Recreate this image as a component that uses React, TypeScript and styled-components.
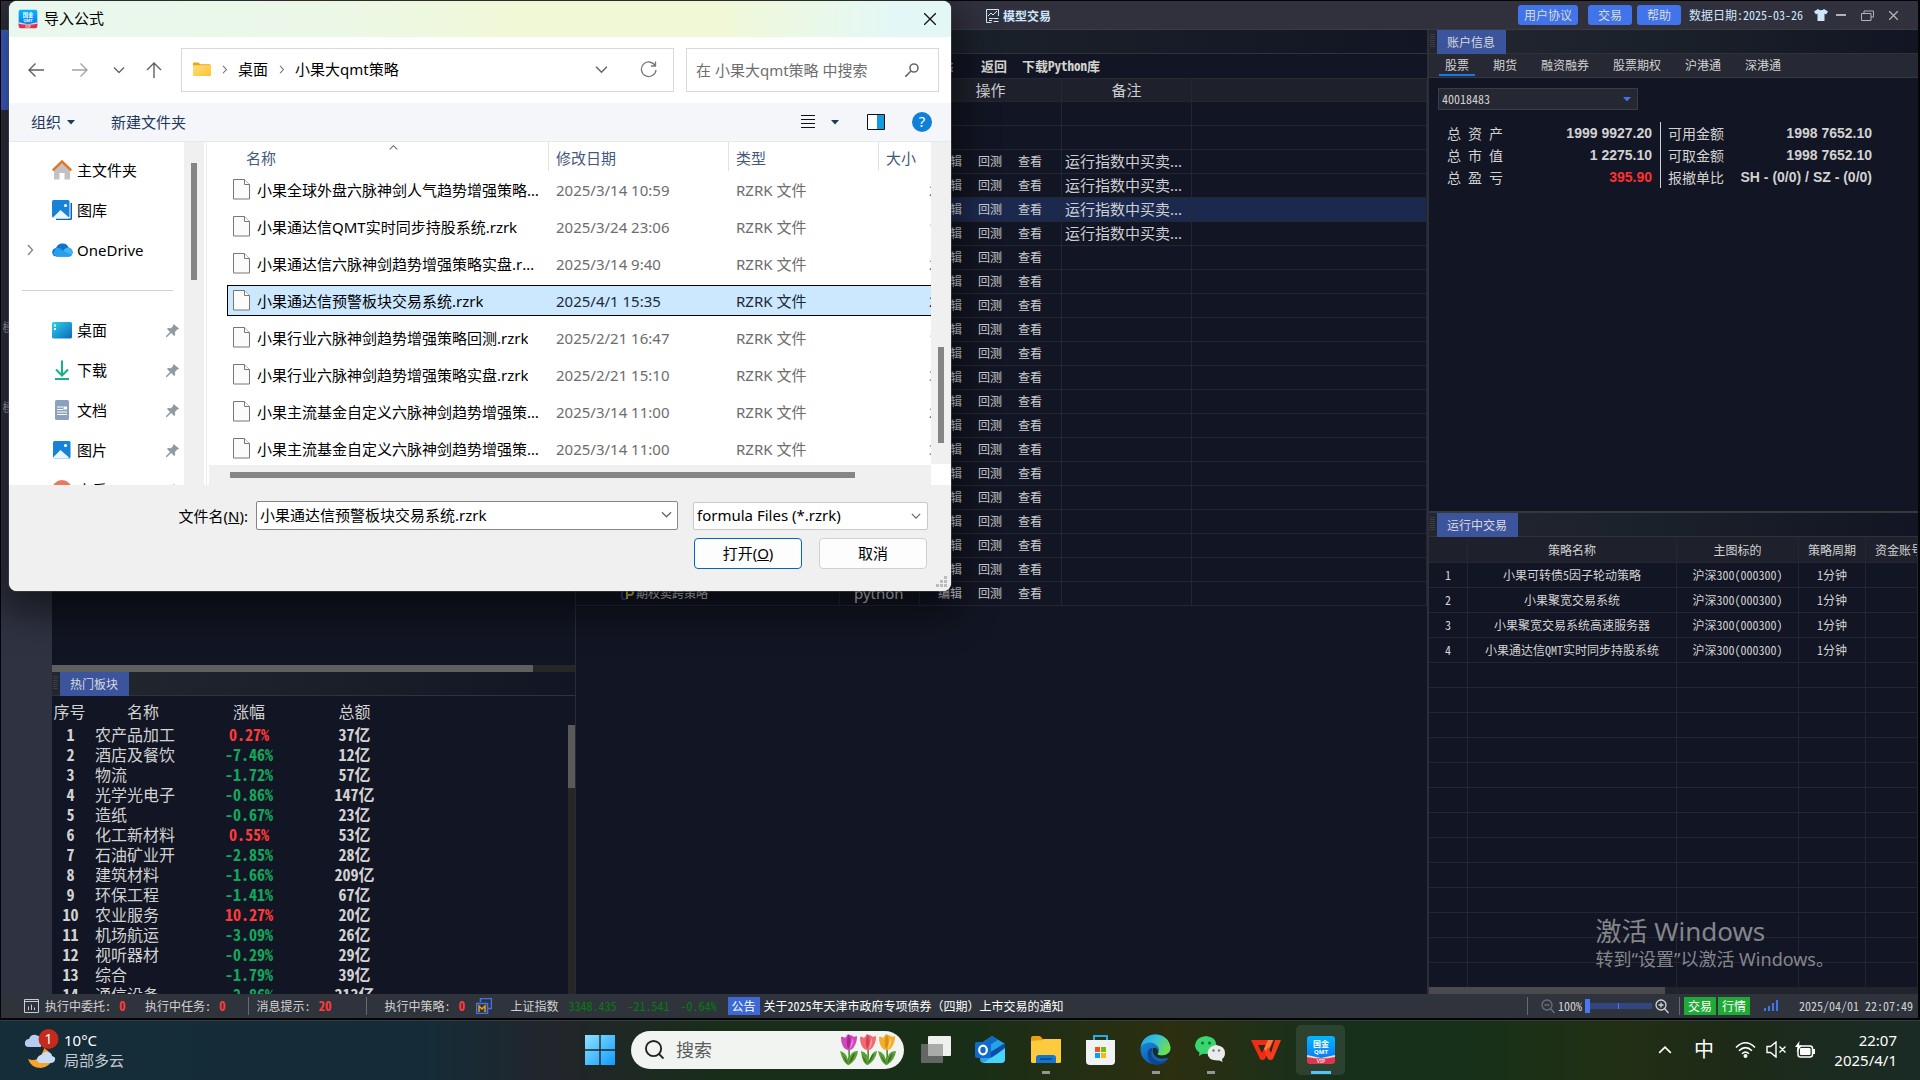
import React from 'react';
import styled, { createGlobalStyle, css } from 'styled-components';

const ui = '"Noto Sans", "Noto Sans CJK SC", sans-serif';
const term = '"Noto Sans Mono CJK SC", "Noto Sans CJK SC", monospace';

const Global = createGlobalStyle`
  *, *::before, *::after { box-sizing: border-box; }
  html, body { margin: 0; height: 100%; overflow: hidden; background: #121523; }
  body { font: 12px/18px ${term}; color: #d2d2d2; }
  button, input, select { font: inherit; color: inherit; margin: 0; padding: 0; border: 0; border-radius: 0; background: none; outline: none; }
  a { color: inherit; text-decoration: none; }
  svg { display: block; flex: none; }
  table { border-collapse: collapse; border-spacing: 0; }
`;

/* ---------- shell ---------- */
const Desktop = styled.div`
  position: relative;
  height: 100vh;
  display: flex;
  flex-direction: column;
  overflow: hidden;
`;
const AppWindow = styled.main`
  flex: 1;
  min-height: 0;
  display: flex;
  flex-direction: column;
  border: 1px solid #050505;
  border-width: 1px 2px 2px 1px;
`;
const TitleBar = styled.header`
  flex: none;
  height: 29px;
  display: flex;
  align-items: center;
  padding: 0 12px 0 985px;
  background: #30313d;
  border-bottom: 1px solid #3a3c44;
`;
const AppTitle = styled.h1`
  margin: 0;
  flex: 1;
  display: flex;
  align-items: center;
  gap: 4px;
  padding-top: 2px;
  font-size: 12px;
  line-height: 18px;
  font-weight: 700;
  color: #cfe6ff;
`;
const PillButton = styled.button<{ $after: number }>`
  height: 20px;
  padding: 0 ${p => (p.$after > 8 ? 6 : 10)}px;
  margin-right: ${p => p.$after}px;
  border-radius: 3px;
  background: #4173ea;
  color: #d8dcd0;
  line-height: 18px;
`;
const DataDate = styled.span`
  color: #cfe6ff;
  margin-right: 11px;
`;
const WinButton = styled.button`
  display: grid;
  place-items: center;
  width: 26px;
  height: 24px;
`;
const WinButtons = styled.div`
  display: flex;
  align-items: center;
`;
const Workspace = styled.div`
  flex: 1;
  min-height: 0;
  display: grid;
  grid-template-columns: 51px 524px minmax(0, 1fr) 491px;
`;

/* ---------- left rail ---------- */
const Rail = styled.nav`
  background: #2f3241;
`;
const RailItem = styled.button<{ $active?: boolean }>`
  width: 100%;
  height: 80px;
  display: flex;
  align-items: flex-end;
  justify-content: center;
  padding-bottom: 14px;
  white-space: nowrap;
  color: #a9acb4;
  background: ${p => (p.$active ? '#4169dc' : 'transparent')};
`;

/* ---------- shared panel parts ---------- */
const PanelStrip = styled.div`
  flex: none;
  height: 24px;
  display: flex;
  background: linear-gradient(90deg, #22262f, #1b212b 45%, #121523);
  border-bottom: 1px solid #30323a;
`;
const Grip = styled.span`
  width: 5px;
  height: 14px;
  margin: 4px 2px 0 1px;
  background: repeating-linear-gradient(#3a3d46 0 1px, transparent 1px 2px);
`;
const PanelTab = styled.button`
  height: 24px;
  padding: 0 11px 0 10px;
  color: #d8dade;
  background: #3c549c;
`;
const Column = styled.section`
  min-width: 0;
  min-height: 0;
  display: flex;
  flex-direction: column;
  overflow: hidden;
`;

/* ---------- hot sectors ---------- */
const LeftColumn = styled(Column)`
  border-right: 1px solid #2a2c35;
`;
const LeftTop = styled.div`
  height: 635px;
  flex: none;
`;
const HTrack = styled.div<{ $thumb: string; $color: string; $track: string }>`
  flex: none;
  height: 7px;
  background: ${p => `linear-gradient(${p.$color}, ${p.$color}) 0 0 / ${p.$thumb} 100% no-repeat ${p.$track}`};
`;
const SectorBody = styled.div`
  flex: 1;
  min-height: 0;
  display: flex;
  border-top: 1px solid #121523;
  overflow: hidden;
`;
const SectorTable = styled.table`
  width: 358px;
  table-layout: fixed;
  align-self: flex-start;
  font-size: 16px;
  line-height: 20px;
  th { height: 27px; padding: 0; font-weight: 400; }
  td { height: 20px; padding: 0; text-align: center; font-weight: 700; white-space: nowrap; }
  td:first-child { padding-left: 2px; }
`;
const SectorName = styled.span`
  display: block;
  text-align: left;
  font-weight: 400;
  padding-left: 8px;
`;
const Change = styled.span<{ $up: boolean }>`
  color: ${p => (p.$up ? '#ff3b3b' : '#12a75c')};
`;
const VTrack = styled.div`
  width: 7px;
  margin: 28px 0 0 auto;
  background: linear-gradient(#5a5a5a, #5a5a5a) 0 0 / 100% 63px no-repeat #262626;
`;

/* ---------- strategy table ---------- */
const MenuRow = styled.div`
  flex: none;
  height: 25px;
  display: flex;
  align-items: center;
  justify-content: flex-start;
  gap: 15px;
  padding-left: 351px;
  border-bottom: 1px solid #262934;
  font-size: 13px;
  font-weight: 700;
  color: #d4d4cf;
  button { white-space: nowrap; }
  button:first-child { margin-right: 13px; }
`;
const line = '1px solid #242732';
const StrategyTable = styled.table`
  width: 100%;
  table-layout: fixed;
  border-collapse: separate;
  font-family: ${ui};
  font-size: 15px;
  line-height: 20px;
  color: #cdced1;
  th { height: 23px; padding: 0; font-weight: 400; background: #1e212b; border-right: ${line}; border-bottom: ${line}; }
  td { height: 24px; padding: 0 0 2px 3px; border-right: ${line}; border-bottom: ${line}; white-space: nowrap; overflow: hidden; }
`;
const StrategyRow = styled.tr<{ $selected?: boolean }>`
  background: ${p => (p.$selected ? '#1c294f' : 'transparent')};
`;
const Actions = styled.span`
  display: flex;
  gap: 16px;
  padding-left: 15px;
  font: 12px/18px ${term};
`;
const TreeName = styled.span`
  display: flex;
  align-items: center;
  gap: 1px;
  padding-left: 42px;
  font: 12px/18px ${term};
`;
const Kind = styled.span`
  display: block;
  padding-left: 11px;
`;

/* ---------- right column ---------- */
const RightColumn = styled(Column)`
  border-left: 2px solid #2c2f38;
`;
const SubTabs = styled.nav`
  flex: none;
  height: 24px;
  display: flex;
  gap: 12px;
  padding-left: 10px;
  background: #262933;
  border-bottom: 1px solid #363841;
`;
const SubTab = styled.a<{ $active?: boolean }>`
  padding: 2px 6px 0;
  height: 22px;
  border-bottom: 2px solid ${p => (p.$active ? '#1778e8' : 'transparent')};
`;
const AccountBody = styled.div`
  height: 435px;
  flex: none;
  padding: 10px 9px;
  border-bottom: 2px solid #36383f;
`;
const Stack = styled.span<{ $w: string }>`
  display: inline-grid;
  width: ${p => p.$w};
  align-items: center;
  > * { grid-area: 1 / 1; }
  > svg { justify-self: end; margin-right: 7px; pointer-events: none; }
`;
const AccountSelect = styled.select`
  appearance: none;
  width: 100%;
  height: 22px;
  padding: 0 3px;
  background: #252833;
  border: 1px solid #3a3c45;
`;
const Balances = styled.div`
  display: flex;
  margin: 12px 0 0 9px;
`;
const BalanceTable = styled.table<{ $w: number }>`
  width: ${p => p.$w}px;
  font-size: 14px;
  line-height: 20px;
  th { height: 22px; padding: 0; text-align: left; font-weight: 400; white-space: nowrap; }
  td { padding: 0; text-align: right; font: 700 14px/20px "Liberation Sans", sans-serif; white-space: nowrap; }
  & + & { margin-left: 8px; padding-left: 7px; border-left: 1px solid #d2d2d2; border-collapse: separate; }
`;
const Loss = styled.span`
  color: #ff3030;
`;
const RunningWrap = styled.div`
  flex: 1;
  min-height: 0;
  overflow: hidden;
`;
const RunningTable = styled.table`
  width: 100%;
  table-layout: fixed;
  border-collapse: separate;
  text-align: center;
  th, td { height: 25px; padding: 0; font-weight: 400; border-right: ${line}; border-bottom: ${line}; white-space: nowrap; overflow: hidden; }
  th { height: 26px; background: #1e212b; }
  th:last-child { padding-left: 9px; text-align: left; }
`;

/* ---------- status bar ---------- */
const StatusBar = styled.footer`
  flex: none;
  height: 24px;
  display: flex;
  align-items: center;
  padding: 0 5px 0 23px;
  background: #2f343c;
  white-space: nowrap;
`;
const StatusItem = styled.span<{ $w?: number }>`
  display: flex;
  align-items: center;
  width: ${p => (p.$w ? p.$w + 'px' : 'auto')};
  b { color: #ff3b3b; margin-left: 8px; font-size: 13px; }
  b + svg { margin-left: auto; }
`;
const IndexName = styled.span`
  margin: 0 10px 0 19px;
`;
const ZoomValue = styled.label`
  margin-left: 3px;
`;
const Divider = styled.span<{ $l: number; $r: number }>`
  width: 1px;
  height: 18px;
  margin: 0 ${p => p.$r}px 0 ${p => p.$l}px;
  background: #666a72;
`;
const IndexValue = styled.span`
  color: #067c0c;
  margin-right: 11px;
`;
const Badge = styled.button<{ $bg: string }>`
  height: 18px;
  padding: 0 4px;
  margin-right: 2px;
  color: #fff;
  background: ${p => p.$bg};
`;
const Notice = styled.a`
  color: #fff;
  margin: 0 auto 0 2px;
`;
const ZoomRange = styled.input`
  appearance: none;
  width: 67px;
  height: 14px;
  margin: 0 3px;
  background: linear-gradient(#4a78f0, #4a78f0) center / 1px 6px no-repeat, linear-gradient(#32477f, #32477f) center / 100% 6px no-repeat;
  &::-webkit-slider-thumb { appearance: none; width: 5px; height: 14px; background: #4a78f0; }
`;
const Clock = styled.time`
  margin-left: 20px;
`;

/* ---------- taskbar ---------- */
const Taskbar = styled.nav`
  flex: none;
  height: 60px;
  display: grid;
  grid-template-columns: minmax(0, 1fr) auto minmax(0, 1fr);
  align-items: center;
  padding-bottom: 2px;
  border-top: 1px solid #343c42;
  background: linear-gradient(90deg, #152c39 0%, #152c38 22%, #22252b 29%, #182e19 38%, #182e17 50%, #2c2f10 61%, #17301c 69%, #163019 76%, #213014 84%, #1d2a17 90%, #1a2b26 100%);
  font-family: ${ui};
  font-size: 15px;
  line-height: 20px;
  color: #fff;
`;
const Weather = styled.button`
  justify-self: start;
  display: flex;
  align-items: center;
  gap: 4px;
  padding-left: 24px;
  text-align: left;
  span { display: block; }
  span span + span { color: #c4cbd0; }
`;
const Pinned = styled.div`
  display: flex;
  align-items: center;
`;
const TaskButton = styled.button<{ $state?: 'open' | 'active' }>`
  display: flex;
  align-items: center;
  justify-content: center;
  width: 49px;
  height: 50px;
  margin: 0 3px;
  border-radius: 5px;
  background:
    ${p => p.$state
      ? css`linear-gradient(${p.$state === 'active' ? '#56c2f5, #56c2f5' : '#92978f, #92978f'}) center bottom 1px / ${p.$state === 'active' ? 20 : 8}px 3px no-repeat`
      : 'none'}
    ${p => (p.$state === 'active' ? ', rgba(255, 255, 255, 0.09)' : '')};
`;
const SearchPill = styled.label`
  display: flex;
  align-items: center;
  width: 273px;
  height: 38px;
  margin: 0 4px;
  padding: 0 7px 0 14px;
  border-radius: 19px;
  background: #f2f4f2;
  input { flex: 1; min-width: 0; margin-left: 12px; font-size: 18px; line-height: 26px; }
  input::placeholder { color: #5a5d5a; opacity: 1; }
`;
const Tray = styled.div`
  justify-self: end;
  display: flex;
  align-items: center;
  padding-right: 23px;
`;
const TrayButton = styled.button<{ $w: number }>`
  width: ${p => p.$w}px;
  height: 32px;
  display: grid;
  place-items: center;
  font-size: 20px;
`;
const TrayClock = styled.button`
  margin-left: 7px;
  text-align: right;
  min-width: 64px;
  span { display: block; }
`;

/* ---------- watermark ---------- */
const Watermark = styled.aside`
  position: absolute;
  right: 86px;
  bottom: 109px;
  font-family: ${ui};
  color: #85868c;
  pointer-events: none;
  font-size: 18px;
  line-height: 24px;
  strong { display: block; font-size: 26px; line-height: 32px; font-weight: 400; }
`;

/* ---------- file dialog ---------- */
const Dialog = styled.div`
  position: absolute;
  left: 9px;
  top: 1px;
  width: 942px;
  border-radius: 8px;
  overflow: hidden;
  background: #fff;
  color: #000;
  font: 15px/22px ${ui};
  box-shadow: 0 0 0 1px rgba(80, 80, 80, 0.5);
`;
const DialogShadow = styled.div`
  position: absolute;
  left: 9px;
  top: 1px;
  width: 942px;
  height: 590px;
  border-radius: 8px;
  box-shadow: 0 14px 36px 8px rgba(0, 0, 0, 0.5);
`;
const DialogTitle = styled.header`
  display: flex;
  align-items: center;
  gap: 6px;
  height: 36px;
  padding: 0 15px 0 9px;
  background: linear-gradient(90deg, #e9f8ee 0, #ebf8e8 33%, #f1f8d6 55%, #f1f8d6 75%, #e3f8f6 94%);
  h2 { flex: 1; margin: 0; padding-bottom: 2px; font: inherit; }
`;
const NavRow = styled.div`
  display: flex;
  align-items: center;
  height: 66px;
  padding: 0 12px 0 14px;
`;
const NavButton = styled.button<{ $w: number }>`
  width: ${p => p.$w}px;
  height: 32px;
  display: grid;
  place-items: center;
`;
const Address = styled.div`
  flex: 1;
  display: flex;
  align-items: center;
  gap: 9px;
  height: 44px;
  margin-right: 12px;
  padding: 0 0 2px 11px;
  border: 1px solid #d9d9d9;
`;
const Spacer = styled.span`
  flex: 1;
`;
const SearchBox = styled.label`
  display: flex;
  align-items: center;
  width: 253px;
  height: 44px;
  padding: 0 19px 0 9px;
  border: 1px solid #d9d9d9;
  input { flex: 1; min-width: 0; }
  input::placeholder { color: #6e6e6e; opacity: 1; }
`;
const Toolbar = styled.div`
  display: flex;
  align-items: center;
  height: 39px;
  padding: 0 19px 0 22px;
  background: #f4f6f9;
  border-bottom: 1px solid #e5e8ec;
  color: #1e395b;
`;
const ToolButton = styled.button<{ $gap: number }>`
  display: flex;
  align-items: center;
  gap: 6px;
  margin-right: ${p => p.$gap}px;
`;
const Browser = styled.div`
  display: flex;
  height: 343px;
`;
const Places = styled.nav`
  width: 175px;
  padding-top: 8px;
  overflow: hidden;
`;
const Place = styled.a`
  display: grid;
  grid-template-columns: 23px 20px 1fr 13px;
  column-gap: 5px;
  align-items: center;
  height: 40px;
  padding: 0 5px 0 15px;
  > svg:nth-of-type(2), > svg:nth-of-type(3) { justify-self: center; }
`;
const PlaceRule = styled.hr`
  margin: 20px 11px 19px 13px;
  border: 0;
  border-top: 1px solid #d0d0d0;
`;
const ScrollV = styled.div<{ $top: number; $size: number }>`
  width: 20px;
  flex: 1;
  background: ${p => `linear-gradient(#858585, #858585) 7px ${p.$top}px / 6px ${p.$size}px no-repeat #f0f0f0`};
`;
const PlacesScroll = styled.div`
  width: 20px;
  display: flex;
`;
const FilePane = styled.div`
  flex: 1;
  min-width: 0;
  margin-left: 2px;
  border-left: 1px solid #ececec;
  display: flex;
  flex-direction: column;
`;
const FileClip = styled.div`
  height: 323px;
  overflow: hidden;
  padding-left: 20px;
`;
const FileTable = styled.table`
  width: 100%;
  table-layout: fixed;
  border-collapse: separate;
  th { height: 29px; padding: 3px 0 0 7px; text-align: left; font-weight: 400; color: #44597a; border-right: 1px solid #e2e2e2; }
  th:first-child { padding-left: 19px; }
  th:last-child { border-right: 0; }
  th svg { position: absolute; left: 380px; top: 142px; }
`;
const FileRow = styled.tr<{ $selected?: boolean }>`
  color: ${p => (p.$selected ? '#1c2a38' : '#6d6d6d')};
  td { height: 37px; padding: ${p => (p.$selected ? '3px 0' : '0')}; white-space: nowrap; overflow: hidden; }
`;
const Cell = styled.span<{ $selected?: boolean; $first?: boolean; $last?: boolean }>`
  display: flex;
  align-items: center;
  gap: 7px;
  height: 31px;
  padding-left: ${p => (p.$first ? 5 : p.$last ? 50 : 7)}px;
  border: 1px solid transparent;
  border-width: 1px 0 1px ${p => (p.$first ? 1 : 0)}px;
  ${p => p.$selected && css`background: #cce8ff; border-color: #000;`}
`;
const FileName = styled.span`
  color: #000;
  max-width: 284px;
  overflow: hidden;
  text-overflow: ellipsis;
`;
const ScrollH = styled.div`
  height: 20px;
  margin-left: 2px;
  background: linear-gradient(#858585, #858585) 21px 7px / 625px 6px no-repeat #f0f0f0;
`;
const FileScroll = styled.div`
  width: 20px;
  display: flex;
  flex-direction: column;
  padding-bottom: 21px;
`;
const DialogForm = styled.form`
  display: flex;
  flex-direction: column;
  gap: 8px;
  height: 106px;
  padding: 16px 23px 0 0;
  background: #f0f0f0;
`;
const FormLine = styled.div<{ $gap: number }>`
  display: flex;
  justify-content: flex-end;
  align-items: center;
  gap: ${p => p.$gap}px;
`;
const NameField = styled.span`
  display: flex;
  align-items: center;
  width: 422px;
  height: 29px;
  margin: 0 7px 0 0;
  padding: 0 5px 2px 3px;
  background: #fff;
  border: 1px solid #868686;
  border-radius: 2px;
  input { flex: 1; min-width: 0; }
`;
const TypeSelect = styled.select`
  appearance: none;
  width: 100%;
  height: 28px;
  padding: 0 3px 2px;
  background: #fff;
  border: 1px solid #c8c8c8;
  border-radius: 2px;
`;
const DialogButton = styled.button<{ $primary?: boolean }>`
  width: 108px;
  height: 31px;
  padding-bottom: 2px;
  border: 1px solid ${p => (p.$primary ? '#0067c0' : '#d0d0d0')};
  border-radius: 4px;
  background: #fdfdfd;
`;
const FormButtons = styled(FormLine)`
  padding-right: 1px;
`;
const ResizeGrip = styled.i`
  position: absolute;
  right: 3px;
  bottom: 3px;
`;

/* ---------- drawings ---------- */
const Chevron = ({ dir = 'down', size = 12, color = '#666' }: { dir?: 'down' | 'up' | 'right'; size?: number; color?: string }) => (
  <svg width={size} height={size} viewBox="0 0 12 12" fill="none" stroke={color} strokeWidth="1.4">
    <path d={dir === 'down' ? 'M1 3.5l5 5 5-5' : dir === 'up' ? 'M1 8.5l5-5 5 5' : 'M4 1l4.5 5L4 11'} />
  </svg>
);
const Caret = ({ color }: { color: string }) => (
  <svg width="8" height="5"><path d="M0 0h8L4 4.5z" fill={color} /></svg>
);
const QmtLogo = ({ w }: { w: number }) => (
  <svg width={w} height={w} viewBox="0 0 30 30">
    <defs><linearGradient id="qmt" x2="0" y2="1"><stop stopColor="#04b5ff" /><stop offset="1" stopColor="#0a73f5" /></linearGradient></defs>
    <rect x="1" y="1" width="28" height="26" rx="3" fill="url(#qmt)" />
    <path d="M1 20l14 3 14-3v4l-14 3-14-3z" fill="#f3d9c0" />
    <path d="M1 22q14 3 28 0v4q0 3-3 3H4q-3 0-3-3z" fill="#dc3552" />
    <text x="15" y="12" fontSize="8" fontWeight="700" textAnchor="middle" fill="#fff" fontFamily="Noto Sans CJK SC">国金</text>
    <text x="15" y="19" fontSize="6" fontWeight="700" textAnchor="middle" fill="#fff" fontFamily="Noto Sans">QMT</text>
    <text x="15" y="28" fontSize="5" fontWeight="700" textAnchor="middle" fill="#ffd9df" fontFamily="Noto Sans">VIP</text>
  </svg>
);
const FolderIcon = ({ w }: { w: number }) => (
  <svg width={w} height={w * 0.8} viewBox="0 0 20 16">
    <defs><linearGradient id="fold" x2="1" y2="1"><stop stopColor="#ffdf80" /><stop offset="1" stopColor="#ffc22e" /></linearGradient></defs>
    <path d="M0 1.500Q0 .5 1 .5h5l2 2h10.500q1 0 1 1V8H0z" fill="#f0a30a" />
    <rect x="0" y="3.500" width="20" height="12" rx="1" fill="url(#fold)" />
  </svg>
);
const DocIcon = () => (
  <svg width="17" height="21" viewBox="0 0 17 21" fill="#fbfbfb" stroke="#777"><path d="M.5.5h11l5 5v14.500H.5z" /><path d="M11.500.5v5h5" /></svg>
);
const PinIcon = () => (
  <svg width="13" height="13" viewBox="0 0 13 13" fill="#8f9aa3"><path d="M7.500 0L13 4.500l-1 1-1 .2-2 2.300.2 3-1 1-3-3L1 13H0v-1l4-4L1 5l1-1 3 .2L7 2z" /></svg>
);
const HomeIcon = () => (
  <svg width="20" height="20" viewBox="0 0 20 20"><path d="M2 9l8-7 8 7v10.500h-5.500V13h-5v6.500H2z" fill="#c2c2c4" /><path d="M.8 10.500L10 1.500l9.200 9" fill="none" stroke="#e8731c" strokeWidth="2.400" /></svg>
);
const PictureIcon = ({ stacked }: { stacked?: boolean }) => (
  <svg width="20" height="20" viewBox="0 0 20 20">
    {stacked && <path d="M4 3h16v15.500q0 1.500-1.500 1.500H4z" fill="#0b63b8" />}
    {stacked && <path d="M0 0h18.500v18.500H0z" fill="#fff" />}
    <rect x={stacked ? 0 : 1} y={stacked ? 0 : 1} width="17.500" height="17.500" rx="1.500" fill="#1683d8" />
    <path d="M1 17.500l7.500-7.500 8.500 7.500q-.5 1-1.500 1H2.500q-1 0-1.500-1z" fill="#e9f6ff" />
    <circle cx="13.500" cy="5.500" r="1.600" fill="#fff" />
  </svg>
);
const OneDriveIcon = () => (
  <svg width="21" height="14" viewBox="0 0 21 14"><path d="M4 5Q6 0 11 .5q4 0 5.500 4Q21 5.500 20.500 10q-.5 3.500-4 3.500H5Q0 13.500.2 9 .5 5.500 4 5z" fill="#1272d0" /><path d="M4 5q4-1 7 3l9 4q-1 1.800-3.500 1.800H5L1 11z" fill="#27a0ec" /><path d="M16.500 4.500Q21 5.500 20.500 10q0 1-.7 2L11 8q2-3.500 5.500-3.500z" fill="#3fb6f2" /></svg>
);
const DesktopIcon = () => (
  <svg width="20" height="17" viewBox="0 0 20 17"><defs><linearGradient id="dk" x2="1" y2="1"><stop stopColor="#2fd0e6" /><stop offset="1" stopColor="#0d68bf" /></linearGradient></defs><rect width="20" height="16.500" rx="1.500" fill="url(#dk)" /><path d="M2 2.500h2v2H2zM2 6h2v2H2z" fill="#e9fcff" /></svg>
);
const DownloadIcon = () => (
  <svg width="20" height="20" viewBox="0 0 20 20" fill="none" stroke="#18ae87" strokeWidth="2"><path d="M10 .5v15M4 9.500l6 6 6-6M3 19h14" /></svg>
);
const DocumentIcon = () => (
  <svg width="20" height="20" viewBox="0 0 20 20"><rect x="3" width="14" height="20" rx="1.500" fill="#8ba2bf" /><path d="M5 7h6M5 9.500h6M5 12h10M5 14.500h10" stroke="#fff" /><path d="M11.500 6.500h3.500v3h-3.500z" fill="#fff" /></svg>
);
const MusicIcon = () => (
  <svg width="20" height="20" viewBox="0 0 20 20"><circle cx="10" cy="10" r="10" fill="#e67a5c" /><path d="M9 15V6l4 2" stroke="#fff" strokeWidth="1.500" fill="none" /></svg>
);
const SearchIcon = ({ size, color }: { size: number; color: string }) => (
  <svg width={size} height={size} viewBox="0 0 20 20" fill="none" stroke={color} strokeWidth="2"><circle cx="9" cy="9" r="8" /><path d="M14.500 14.500l5 5" /></svg>
);
const Tulip = ({ x, c, d, tip, spread }: { x: number; c: string; d: string; tip: string; spread: number }) => (
  <g transform={`translate(${x} 0)`}>
    <path d="M10 15q1 8-1 16" stroke="#4b8f2a" strokeWidth="1.600" fill="none" />
    <path d={`M9 32Q4 30 ${10 - spread} 18q4 1 6 4 2 4 3 8 0-7 3-10 2-2 ${spread - 3}-2-1 9-9 14z`} fill="#5c9e35" />
    <path d="M9 32q-1-6-5-9 3 6 5 9zM10 31q2-8 6-11-2 7-6 11z" fill="#2f6e1f" />
    <path d="M2 4q2-1 4 1l3-4q2 2 3 1l3 2q2-1 3-1 0 6-2 9-2 5-6 5-5 0-7-6-1-3-1-7z" fill={c} />
    <path d="M10 1Q6 8 9 16q5-6 1-15z" fill={d} />
    <path d="M14 5q-3 5-3 11 4-4 3-11z" fill={tip} />
  </g>
);
const Tulips = () => (
  <svg width="60" height="34" viewBox="0 0 60 34">
    <Tulip x={2} c="#d048bd" d="#a9279a" tip="#e87fd8" spread={9} />
    <Tulip x={21} c="#ef6a75" d="#d9434f" tip="#f79aa0" spread={7} />
    <Tulip x={40} c="#f3ae2c" d="#dc8f17" tip="#fbcf6b" spread={9} />
  </svg>
);
const WeatherIcon = () => (
  <svg width="36" height="44" viewBox="0 0 36 44">
    <path d="M4 31q8 3 12-3 4-5 4-8 8 5 8 11-2 8-11 9-10 0-13-9z" fill="#f5a32a" />
    <path d="M17 35q-4 0-4-4 1-4 5-4 2-4 6-3 4 1 4 4 4 1 3 4-1 3-4 3z" fill="#c7dcf6" />
    <path d="M5 19q-5 0-4-5 1-3 4-3 2-5 7-4 4 1 5 4v8z" fill="#b4cdf0" />
    <circle cx="24.500" cy="11" r="10" fill="#c42b1c" />
    <text x="24.500" y="16" fontSize="14" textAnchor="middle" fill="#fff" fontFamily="Noto Sans">1</text>
  </svg>
);
const StartIcon = () => (
  <svg width="30" height="30" viewBox="0 0 30 30"><defs><linearGradient id="win" x2="1" y2="1"><stop stopColor="#8fe2ff" /><stop offset="1" stopColor="#0f9bff" /></linearGradient></defs><path d="M0 0h14.300v14.300H0zM15.700 0H30v14.300H15.700zM0 15.700h14.300V30H0zM15.700 15.700H30V30H15.700z" fill="url(#win)" /></svg>
);
const TaskViewIcon = () => (
  <svg width="30" height="28" viewBox="0 0 30 28"><rect y="8" width="22" height="19" rx="1" fill="#636663" /><rect x="7" width="23" height="20" rx="1" fill="#eeefee" /><rect x="7" y="8" width="15" height="12" fill="#a9aba9" /></svg>
);
const OutlookIcon = () => (
  <svg width="31" height="28" viewBox="0 0 31 28">
    <path d="M5 8L17 0l13 8v15q0 4-4 4H9q-4 0-4-4z" fill="#2ba3ea" />
    <path d="M6 8l11-8 6 4-13 9z" fill="#1269c4" />
    <path d="M10 12L23 4l7 4-15 12z" fill="#24a3ea" />
    <path d="M14 17L30 7v6L17 24z" fill="#0c4ba8" />
    <path d="M30 12v11q0 4-4 4H8L22 18z" fill="#49d2fa" />
    <rect y="6" width="16" height="16" rx="2" fill="#0f6acb" />
    <ellipse cx="8" cy="14" rx="3.800" ry="4.300" fill="none" stroke="#fff" strokeWidth="2.200" />
  </svg>
);
const ExplorerIcon = () => (
  <svg width="30" height="28" viewBox="0 0 30 28">
    <path d="M0 2q0-2 2-2h7l3 3h16q2 0 2 2v6H0z" fill="#e8a010" /><path d="M0 5l12-1 1-1h17v23q0 1-2 1H2q-2 0-2-1z" fill="#ffcb3d" />
    <path d="M5 27v-5q0-3 3-3h14q3 0 3 3v5z" fill="#1277cf" /><path d="M9 23h12" stroke="#0b4c91" strokeWidth="1.600" />
  </svg>
);
const StoreIcon = () => (
  <svg width="29" height="30" viewBox="0 0 29 30"><path d="M8 6V1h13v5" fill="none" stroke="#28a8ea" strokeWidth="2" /><path d="M0 5h29v21q0 4-4 4H4q-4 0-4-4z" fill="#f1f2f4" /><path d="M9 12h5v5H9z" fill="#f25022" /><path d="M15 12h5v5h-5z" fill="#7fba00" /><path d="M9 18h5v5H9z" fill="#00a4ef" /><path d="M15 18h5v5h-5z" fill="#ffb900" /></svg>
);
const EdgeIcon = () => (
  <svg width="31" height="31" viewBox="0 0 31 31">
    <defs>
      <linearGradient id="eg" x2="1" y2=".5"><stop stopColor="#1d9fe6" /><stop offset=".5" stopColor="#37c1d8" /><stop offset="1" stopColor="#6ede4c" /></linearGradient>
      <linearGradient id="eb" x2=".6" y2="1"><stop stopColor="#1c93e4" /><stop offset="1" stopColor="#0c55a8" /></linearGradient>
    </defs>
    <circle cx="15.500" cy="15.500" r="15" fill="url(#eb)" />
    <path d="M.7 13Q3 1 15.500.5 28 1 30.500 13q.5 8-8 8.500-4 0-5-1.500 2-2 1.500-5Q17 9 10 8.500 4 8.500.7 13z" fill="url(#eg)" />
    <path d="M12.500 14q-3 9 4 12.500 6 2.500 12-2.500-4 7-12 7Q7 29 7.500 19q1-5 5-5z" fill="#0d478f" />
    <path d="M17.500 20q1 1.500 5 1.500 6-.3 8.500-6 0 6-2.500 8.500-5 3-10 1-5-2.500-6-8 0-2 .5-3 3-1 4.500 1.500.7 2.500 0 4.500z" fill="#17301c" />
    <path d="M13 14q-1 6 3 9 5 3 11 1l1.500.5q-6 4.500-12 2Q9 23 12.500 14z" fill="#1b5fae" />
  </svg>
);
const WeChatIcon = () => (
  <svg width="31" height="27" viewBox="0 0 31 27"><path d="M11 0q10 1 10.500 9Q21 17 11 18l-3-.3L4 20l.5-3.500Q0 14 0 9 1 1 11 0z" fill="#39d56f" /><path d="M21 9q9 1 9 8 0 4-3 6l.5 3-3-1.500q-12 .5-12-7.500 1-7 8.500-8z" fill="#ebebeb" /><circle cx="7.500" cy="7" r="1.500" fill="#14703a" /><circle cx="14.500" cy="7" r="1.500" fill="#14703a" /><circle cx="18.500" cy="14.500" r="1.200" fill="#777" /><circle cx="24" cy="14.500" r="1.200" fill="#777" /></svg>
);
const WpsIcon = () => (
  <svg width="30" height="20" viewBox="0 0 30 20">
    <path d="M0 0h17l-2 5H7l4 8 6-13h6l-9 19q-3 2-5 0z" fill="#f02a14" />
    <path d="M17 0h5l-6 13-3-4z" fill="#ff7a3c" />
    <path d="M24 0h6l-8 19q-3 2-5 0l-3-6 3-6 3 6z" fill="#f83a1c" />
  </svg>
);
const WifiIcon = () => (
  <svg width="21" height="17" viewBox="0 0 21 17" fill="none" stroke="#fff" strokeWidth="1.600"><path d="M1 6.500q9.500-9.500 19 0M4 9.800q6.500-6.500 13 0M7 12.800q3.500-3.500 7 0" /><circle cx="10.500" cy="15" r="1.200" fill="#fff" /></svg>
);
const MuteIcon = () => (
  <svg width="21" height="17" viewBox="0 0 21 17" fill="none" stroke="#fff" strokeWidth="1.400"><path d="M1 5.500h3.500L10 1v15l-5.500-4.500H1zM13.500 5.500l6 6M19.500 5.500l-6 6" /></svg>
);
const BatteryIcon = () => (
  <svg width="21" height="18" viewBox="0 0 21 18"><rect x="3" y="5" width="14.500" height="11" rx="2.500" fill="none" stroke="#fff" strokeWidth="1.500" /><rect x="5" y="7" width="10.500" height="7" rx="1" fill="#fff" /><path d="M19 8v5" stroke="#fff" strokeWidth="2" /><path d="M4.500 0L0 6h3L1.500 11 7 4.500H4z" fill="#fff" /></svg>
);
const ModelIcon = () => (
  <svg width="13" height="14" viewBox="0 0 13 14" fill="none" stroke="#cfe6ff"><path d="M12.500 7V.5H.5v13h5M2 7l3-3 2 2 4-4M3 9.500h4M3 11.500h3M7.500 9.500h5M7.500 12.500h5" /></svg>
);
const ZoomGlass = ({ plus }: { plus?: boolean }) => (
  <svg width="14" height="15" viewBox="0 0 14 15" fill="none" stroke={plus ? '#d0d3d8' : '#6b707a'} strokeWidth="1.300"><circle cx="6" cy="6" r="5" /><path d="M9.500 9.500l4 4.500M3.500 6h5" />{plus && <path d="M6 3.500v5" />}</svg>
);
const TasksIcon = () => (
  <svg width="15" height="14" fill="none" stroke="#c9ccd2"><path d="M.5.5h14v13H.5zM0 2.500h15M4.500 11V7.500M7.500 11V5.500M10.500 11V8.500" /></svg>
);
const ModelStackIcon = () => (
  <svg width="16" height="16" fill="none"><path d="M4.500 4V.5h11v10H12M.5 5.500h11v10H.5z" stroke="#4173ea" strokeWidth="1.500" /><path d="M3 14V8l3 3 3-3v6" stroke="#e8a020" strokeWidth="1.500" /></svg>
);
const SignalIcon = () => (
  <svg width="15" height="12" fill="#4173ea"><path d="M0 8h2v3H0zM4 6h2v5H4zM8 3h2v8H8zM12 0h2v11h-2z" /></svg>
);

/* ---------- data ---------- */
const sectors: [string, string, string][] = [
  ['农产品加工', '0.27%', '37亿'], ['酒店及餐饮', '-7.46%', '12亿'], ['物流', '-1.72%', '57亿'],
  ['光学光电子', '-0.86%', '147亿'], ['造纸', '-0.67%', '23亿'], ['化工新材料', '0.55%', '53亿'],
  ['石油矿业开', '-2.85%', '28亿'], ['建筑材料', '-1.66%', '209亿'], ['环保工程', '-1.41%', '67亿'],
  ['农业服务', '10.27%', '20亿'], ['机场航运', '-3.09%', '26亿'], ['视听器材', '-0.29%', '29亿'],
  ['综合', '-1.79%', '39亿'], ['通信设备', '-2.86%', '213亿'],
];
const files: [string, string, string][] = [
  ['小果全球外盘六脉神剑人气趋势增强策略实盘.rzrk', '2025/3/14 10:59', '2'],
  ['小果通达信QMT实时同步持股系统.rzrk', '2025/3/24 23:06', '1'],
  ['小果通达信六脉神剑趋势增强策略实盘.rzrk', '2025/3/14 9:40', '2'],
  ['小果通达信预警板块交易系统.rzrk', '2025/4/1 15:35', '2'],
  ['小果行业六脉神剑趋势增强策略回测.rzrk', '2025/2/21 16:47', '1'],
  ['小果行业六脉神剑趋势增强策略实盘.rzrk', '2025/2/21 15:10', '3'],
  ['小果主流基金自定义六脉神剑趋势增强策略回测.rzrk', '2025/3/14 11:00', '2'],
  ['小果主流基金自定义六脉神剑趋势增强策略实盘.rzrk', '2025/3/14 11:00', '3'],
];
const running = ['小果可转债5因子轮动策略', '小果聚宽交易系统', '小果聚宽交易系统高速服务器', '小果通达信QMT实时同步持股系统'];

const FileDialog = () => (
  <Dialog role="dialog" aria-labelledby="dialog-title">
    <DialogTitle>
      <QmtLogo w={20} />
      <h2 id="dialog-title">导入公式</h2>
      <button aria-label="关闭"><svg width="12" height="12" stroke="#111" strokeWidth="1.300"><path d="M0 0l12 12M12 0L0 12" /></svg></button>
    </DialogTitle>
    <NavRow>
      <NavButton $w={26} aria-label="后退"><svg width="16" height="14" fill="none" stroke="#5f5f5f" strokeWidth="1.400"><path d="M16 7H1M7.500.5L1 7l6.500 6.500" /></svg></NavButton>
      <NavButton $w={62} aria-label="前进"><svg width="16" height="14" fill="none" stroke="#a3a3a3" strokeWidth="1.400"><path d="M0 7h15M8.500.5L15 7l-6.500 6.500" /></svg></NavButton>
      <NavButton $w={16} aria-label="最近"><Chevron /></NavButton>
      <NavButton $w={54} aria-label="上移"><svg width="16" height="16" fill="none" stroke="#5f5f5f" strokeWidth="1.400"><path d="M8 16V1M1 8l7-7 7 7" /></svg></NavButton>
      <Address>
        <FolderIcon w={18} />
        <Chevron dir="right" size={9} />
        <a href="#desktop">桌面</a>
        <Chevron dir="right" size={9} />
        <a href="#folder">小果大qmt策略</a>
        <Spacer />
        <NavButton $w={26} aria-label="展开"><Chevron size={13} /></NavButton>
        <NavButton $w={50} aria-label="刷新"><svg width="17" height="17" viewBox="0 0 17 17" fill="none" stroke="#777" strokeWidth="1.300"><path d="M15 4.500A7.300 7.300 0 1 0 16 9M15.500.5v4.500H11" /></svg></NavButton>
      </Address>
      <SearchBox>
        <input aria-label="搜索" placeholder="在 小果大qmt策略 中搜索" />
        <svg width="14" height="14" viewBox="0 0 14 14" fill="none" stroke="#6a6a6a" strokeWidth="1.600"><circle cx="9" cy="5" r="4" /><path d="M6 8l-6 6" /></svg>
      </SearchBox>
    </NavRow>
    <Toolbar>
      <ToolButton $gap={36}>组织<Caret color="#1e395b" /></ToolButton>
      <ToolButton $gap={0}>新建文件夹</ToolButton>
      <Spacer />
      <ToolButton $gap={16} aria-label="视图"><svg width="14" height="14" stroke="#111"><path d="M0 .5h14M0 4.500h14M0 8.500h14M0 12.500h14" /></svg></ToolButton>
      <ToolButton $gap={28} aria-label="更多视图"><Caret color="#1e395b" /></ToolButton>
      <ToolButton $gap={27} aria-label="预览窗格"><svg width="18" height="16"><path d="M10 1h7v14h-7z" fill="#129be0" /><path d="M1 1h9v14H1z" fill="#fff" /><path d="M.5.5h17v15H.5z" fill="none" stroke="#111" /></svg></ToolButton>
      <ToolButton $gap={0} aria-label="帮助"><svg width="20" height="20"><circle cx="10" cy="10" r="10" fill="#0f80d6" /><text x="10" y="15" fontSize="15" textAnchor="middle" fill="#fff">?</text></svg></ToolButton>
    </Toolbar>
    <Browser>
      <Places>
        <Place href="#home"><span /><HomeIcon />主文件夹</Place>
        <Place href="#gallery"><span /><PictureIcon stacked />图库</Place>
        <Place href="#onedrive"><Chevron dir="right" size={12} color="#888" /><OneDriveIcon />OneDrive</Place>
        <PlaceRule />
        <Place href="#p1"><span /><DesktopIcon />桌面<PinIcon /></Place>
        <Place href="#p2"><span /><DownloadIcon />下载<PinIcon /></Place>
        <Place href="#p3"><span /><DocumentIcon />文档<PinIcon /></Place>
        <Place href="#p4"><span /><PictureIcon />图片<PinIcon /></Place>
        <Place href="#p5"><span /><MusicIcon />音乐<PinIcon /></Place>
      </Places>
      <PlacesScroll><ScrollV $top={21} $size={117} /></PlacesScroll>
      <FilePane>
        <FileClip>
          <FileTable>
            <colgroup><col style={{ width: 322 }} /><col style={{ width: 180 }} /><col style={{ width: 150 }} /><col /></colgroup>
            <thead><tr><th>名称<Chevron dir="up" size={9} /></th><th>修改日期</th><th>类型</th><th>大小</th></tr></thead>
            <tbody>
              {files.map(([name, date, size], i) => {
                const sel = i === 3;
                return (
                  <FileRow key={name} $selected={sel}>
                    <td><Cell $first $selected={sel}><DocIcon /><FileName>{name}</FileName></Cell></td>
                    <td><Cell $selected={sel}>{date}</Cell></td>
                    <td><Cell $selected={sel}>RZRK 文件</Cell></td>
                    <td><Cell $last $selected={sel}>{size}</Cell></td>
                  </FileRow>
                );
              })}
            </tbody>
          </FileTable>
        </FileClip>
        <ScrollH />
      </FilePane>
      <FileScroll><ScrollV $top={205} $size={96} /></FileScroll>
    </Browser>
    <DialogForm onSubmit={e => e.preventDefault()}>
      <FormLine $gap={8}>
        <label htmlFor="file-name">文件名(<u>N</u>):</label>
        <NameField><input id="file-name" defaultValue="小果通达信预警板块交易系统.rzrk" /><Chevron size={11} /></NameField>
        <Stack $w="235px">
          <TypeSelect aria-label="文件类型"><option>formula Files (*.rzrk)</option></TypeSelect>
          <Chevron size={10} />
        </Stack>
      </FormLine>
      <FormButtons $gap={17}>
        <DialogButton $primary>打开(<u>O</u>)</DialogButton>
        <DialogButton type="button">取消</DialogButton>
      </FormButtons>
    </DialogForm>
    <ResizeGrip><svg width="12" height="12" fill="#bcbcbc"><path d="M8 0h3v3H8zM4 4h3v3H4zM8 4h3v3H8zM0 8h3v3H0zM4 8h3v3H4zM8 8h3v3H8z" /></svg></ResizeGrip>
  </Dialog>
);

const SectorPanel = () => (
  <LeftColumn>
    <LeftTop />
    <HTrack $thumb="481px" $color="#5f5f5f" $track="#262626" />
    <PanelStrip><Grip /><PanelTab>热门板块</PanelTab></PanelStrip>
    <SectorBody>
      <SectorTable>
        <colgroup><col style={{ width: 35 }} /><col style={{ width: 112 }} /><col style={{ width: 100 }} /><col /></colgroup>
        <thead><tr><th>序号</th><th>名称</th><th>涨幅</th><th>总额</th></tr></thead>
        <tbody>
          {sectors.map(([name, pct, total], i) => (
            <tr key={name}><td>{i + 1}</td><td><SectorName>{name}</SectorName></td><td><Change $up={!pct.startsWith('-')}>{pct}</Change></td><td>{total}</td></tr>
          ))}
        </tbody>
      </SectorTable>
      <VTrack />
    </SectorBody>
  </LeftColumn>
);

const StrategyPanel = () => (
  <Column>
    <PanelStrip />
    <MenuRow><button>删除</button><button>返回</button><button>下载Python库</button></MenuRow>
    <StrategyTable>
      <colgroup><col style={{ width: 264 }} /><col style={{ width: 80 }} /><col style={{ width: 142 }} /><col style={{ width: 130 }} /><col /></colgroup>
      <thead><tr><th /><th /><th>操作</th><th>备注</th><th /></tr></thead>
      <tbody>
        {Array.from({ length: 21 }, (_, i) => (
          <StrategyRow key={i} $selected={i === 4}>
            <td>{i === 20 && <TreeName><svg width="14" height="14" fill="none"><path d="M4 1H1v12h4" stroke="#4169dc" /><path d="M6 13V4h3q3 0 3 2.500T9 9H6" stroke="#c8b84a" strokeWidth="2" /></svg>期权卖跨策略</TreeName>}</td>
            <td>{i === 20 && <Kind>python</Kind>}</td>
            <td>{i > 1 && <Actions><button>编辑</button><button>回测</button><button>查看</button></Actions>}</td>
            <td>{i > 1 && i < 6 && '运行指数中买卖...'}</td>
            <td />
          </StrategyRow>
        ))}
      </tbody>
    </StrategyTable>
  </Column>
);

const AccountPanel = () => (
  <RightColumn>
    <PanelStrip><Grip /><PanelTab>账户信息</PanelTab></PanelStrip>
    <SubTabs>
      {['股票', '期货', '融资融券', '股票期权', '沪港通', '深港通'].map((t, i) => <SubTab key={t} href="#tab" $active={i === 0}>{t}</SubTab>)}
    </SubTabs>
    <AccountBody>
      <Stack $w="200px">
        <AccountSelect aria-label="账户"><option>40018483</option></AccountSelect>
        <Caret color="#4173ea" />
      </Stack>
      <Balances>
        <BalanceTable $w={205}><tbody>
          <tr><th>总 资 产</th><td>1999 9927.20</td></tr>
          <tr><th>总 市 值</th><td>1 2275.10</td></tr>
          <tr><th>总 盈 亏</th><td><Loss>395.90</Loss></td></tr>
        </tbody></BalanceTable>
        <BalanceTable $w={212}><tbody>
          <tr><th>可用金额</th><td>1998 7652.10</td></tr>
          <tr><th>可取金额</th><td>1998 7652.10</td></tr>
          <tr><th>报撤单比</th><td>SH - (0/0) / SZ - (0/0)</td></tr>
        </tbody></BalanceTable>
      </Balances>
    </AccountBody>
    <PanelStrip><Grip /><PanelTab>运行中交易</PanelTab></PanelStrip>
    <RunningWrap>
      <RunningTable>
        <colgroup><col style={{ width: 39 }} /><col style={{ width: 209 }} /><col style={{ width: 122 }} /><col style={{ width: 67 }} /><col /></colgroup>
        <thead><tr><th /><th>策略名称</th><th>主图标的</th><th>策略周期</th><th>资金账号</th></tr></thead>
        <tbody>
          {Array.from({ length: 17 }, (_, i) => (
            <tr key={i}>
              <td>{running[i] && i + 1}</td><td>{running[i]}</td><td>{running[i] && '沪深300(000300)'}</td><td>{running[i] && '1分钟'}</td><td />
            </tr>
          ))}
        </tbody>
      </RunningTable>
    </RunningWrap>
    <HTrack $thumb="236px" $color="#4a4a4e" $track="#22242d" />
  </RightColumn>
);

export default function App() {
  return (
    <Desktop>
      <Global />
      <AppWindow>
        <TitleBar>
          <AppTitle><ModelIcon />模型交易</AppTitle>
          <PillButton $after={10}>用户协议</PillButton>
          <PillButton $after={5}>交易</PillButton>
          <PillButton $after={8}>帮助</PillButton>
          <DataDate>数据日期:2025-03-26</DataDate>
          <WinButtons>
            <svg width="14" height="12" fill="#cfe6ff"><path d="M4 0q3 2.500 6 0l4 2.500-2 3-1.500-1V12h-7V4.500l-1.500 1-2-3z" /></svg>
            <WinButton aria-label="最小化"><svg width="10" height="2" fill="#b0b2ba"><path d="M0 0h10v2H0z" /></svg></WinButton>
            <WinButton aria-label="还原"><svg width="13" height="11" fill="none" stroke="#b0b2ba"><path d="M3 3V1h9.500v6H10M.5 3.500H10v7H.5z" /></svg></WinButton>
            <WinButton aria-label="关闭窗口"><svg width="9" height="9" stroke="#b0b2ba" strokeWidth="1.300"><path d="M0 0l9 9M9 0L0 9" /></svg></WinButton>
          </WinButtons>
        </TitleBar>
        <Workspace>
          <Rail>
            <RailItem $active />
            <RailItem />
            <RailItem />
            <RailItem>模型研究</RailItem>
            <RailItem>模型交易</RailItem>
          </Rail>
          <SectorPanel />
          <StrategyPanel />
          <AccountPanel />
        </Workspace>
        <StatusBar>
          <StatusItem $w={121}><TasksIcon />&nbsp;执行中委托:<b>0</b></StatusItem>
          <StatusItem>执行中任务:<b>0</b></StatusItem>
          <Divider $l={22} $r={8} />
          <StatusItem>消息提示:<b>20</b></StatusItem>
          <Divider $l={34} $r={18} />
          <StatusItem $w={107}>执行中策略:<b>0</b><ModelStackIcon /></StatusItem>
          <IndexName>上证指数</IndexName>
          <IndexValue>3348.435</IndexValue><IndexValue>-21.541</IndexValue><IndexValue>-0.64%</IndexValue>
          <Badge $bg="#3d69d6">公告</Badge>
          <Notice href="#notice">关于2025年天津市政府专项债券（四期）上市交易的通知</Notice>
          <Divider $l={0} $r={13} />
          <ZoomGlass />
          <ZoomValue htmlFor="zoom">100%</ZoomValue>
          <ZoomRange id="zoom" type="range" min="0" max="100" defaultValue="0" />
          <ZoomGlass plus />
          <Divider $l={10} $r={4} />
          <Badge $bg="#1faa35">交易</Badge>
          <Badge $bg="#1faa35">行情</Badge>
          &nbsp;&nbsp;<SignalIcon />
          <Clock>2025/04/01 22:07:49</Clock>
        </StatusBar>
      </AppWindow>

      <Taskbar>
        <Weather><WeatherIcon /><span><span>10°C</span><span>局部多云</span></span></Weather>
        <Pinned>
          <TaskButton aria-label="开始"><StartIcon /></TaskButton>
          <SearchPill><SearchIcon size={19} color="#222" /><input aria-label="搜索应用" placeholder="搜索" /><Tulips /></SearchPill>
          <TaskButton aria-label="任务视图"><TaskViewIcon /></TaskButton>
          <TaskButton aria-label="Outlook"><OutlookIcon /></TaskButton>
          <TaskButton $state="open" aria-label="资源管理器"><ExplorerIcon /></TaskButton>
          <TaskButton aria-label="应用商店"><StoreIcon /></TaskButton>
          <TaskButton $state="open" aria-label="Edge"><EdgeIcon /></TaskButton>
          <TaskButton $state="open" aria-label="微信"><WeChatIcon /></TaskButton>
          <TaskButton aria-label="WPS"><WpsIcon /></TaskButton>
          <TaskButton $state="active" aria-label="QMT"><QmtLogo w={30} /></TaskButton>
        </Pinned>
        <Tray>
          <TrayButton $w={38} aria-label="更多"><Chevron dir="up" size={14} color="#fff" /></TrayButton>
          <TrayButton $w={40}>中</TrayButton>
          <TrayButton $w={42} aria-label="网络"><WifiIcon /></TrayButton>
          <TrayButton $w={18} aria-label="静音"><MuteIcon /></TrayButton>
          <TrayButton $w={42} aria-label="电池"><BatteryIcon /></TrayButton>
          <TrayClock><span>22:07</span><span>2025/4/1</span></TrayClock>
        </Tray>
      </Taskbar>

      <Watermark><strong>激活 Windows</strong>转到“设置”以激活 Windows。</Watermark>
      <DialogShadow />
      <FileDialog />
    </Desktop>
  );
}
